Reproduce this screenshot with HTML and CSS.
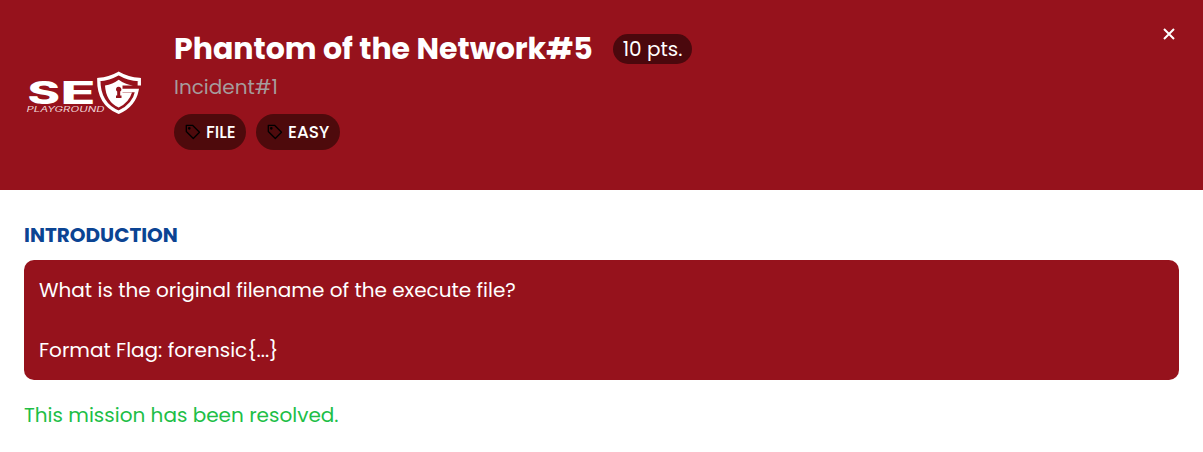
FILE: index.html
```
<!DOCTYPE html>
<html lang="en">
<head>
<meta charset="utf-8">
<title>Phantom of the Network#5</title>
<link rel="stylesheet" href="styles.css">
</head>
<body>
<header class="banner">
  <svg class="logo" viewBox="24 32 120 120" role="img" aria-label="SEC Playground">
    <text class="logo-name" x="27.500" y="104" textLength="32.500" lengthAdjust="spacingAndGlyphs">S</text>
    <text class="logo-name" x="60.500" y="104" textLength="35" lengthAdjust="spacingAndGlyphs">E</text>
    <text class="logo-sub" x="26.500" y="112.300" textLength="78" lengthAdjust="spacingAndGlyphs">PLAYGROUND</text>
    <path class="shield-ring" d="M139.300 85.500V79.500Q128 79 118.700 73.500Q109 79 98.800 79.500Q98.500 104 118.700 112.300Q134 105.500 137 90.500H122"/>
    <path class="shield-core" d="M118.700 79.800Q125 84.500 133 85.500H122.500V92.500H132Q129 102.500 118.700 107.500Q106 102 105 85.500Q112.500 84.500 118.700 79.800Z"/>
    <path class="keyhole" d="M116 89.500a2.700 2.700 0 1 1 4.200 2.100V95.500H121.500V98H116V95.500H117.200V91.600Q116 91 116 89.500Z"/>
  </svg>
  <div class="heading">
    <div class="title-row">
      <h1 class="title">Phantom of the Network#5</h1>
      <span class="points">10 pts.</span>
    </div>
    <div class="series">Incident#1</div>
    <div class="tags">
      <span class="tag"><svg class="tag-icon" viewBox="0 0 16 16"><path d="M1.300 1.300H7.500L14.500 8.300L8.300 14.500L1.300 7.500Z"/><circle cx="4.300" cy="4.300" r=".7"/></svg><span>FILE</span></span>
      <span class="tag easy-tag"><svg class="tag-icon" viewBox="0 0 16 16"><path d="M1.300 1.300H7.500L14.500 8.300L8.300 14.500L1.300 7.500Z"/><circle cx="4.300" cy="4.300" r=".7"/></svg><span>EASY</span></span>
    </div>
  </div>
  <button class="close" aria-label="Close"><svg viewBox="0 0 12 12"><path d="M1 1L11 11M11 1L1 11"/></svg></button>
</header>
<main class="content">
  <h2 class="section-title">INTRODUCTION</h2>
  <div class="question">
    <p class="prompt">What is the original filename of the execute file?</p>
    <p class="format">Format Flag: forensic{...}</p>
  </div>
  <p class="status">This mission has been resolved.</p>
</main>
</body>
</html>
```
FILE: styles.css
```
* { box-sizing: border-box; }
body { margin: 0; background: #fff; font-family: Poppins, Inter, "Liberation Sans", sans-serif; font-size: 20px; line-height: 30px; }
h1, h2, p { margin: 0; }
.banner { display: flex; align-items: flex-start; height: 190px; padding: 32px 28px 0 24px; background: #96121c; color: #fff; }
.logo { width: 120px; height: 120px; margin-right: 30px; flex: none; }
.logo-name { font: 800 31px Inter, sans-serif; fill: #fff; }
.logo-sub { font: italic 400 7px Inter, sans-serif; fill: #f0d5d7; }
.shield-ring { fill: none; stroke: #fff; stroke-width: 3.300; }
.shield-core { fill: #fff; }
.keyhole { fill: #96121c; }
.heading { flex: 1; }
.title-row { display: flex; align-items: center; height: 34px; }
.title { width: 439px; font-size: 30px; font-weight: 700; line-height: 34px; white-space: nowrap; }
.points { width: 79px; height: 30px; border-radius: 15px; background: #4b080d; text-align: center; line-height: 30px; }
.series { margin-top: 6px; color: #a69c9c; height: 30px; font-weight: 400; }
.tags { display: flex; gap: 10px; margin-top: 12px; }
.tag { display: flex; align-items: center; width: 72px; height: 36px; padding-left: 11px; border-radius: 18px; background: #4e0a0c; font-size: 17px; font-weight: 500; }
.easy-tag { width: 84px; }
.tag-icon { width: 16px; height: 16px; margin-right: 5px; fill: none; stroke: #000; stroke-width: 1.300; stroke-linejoin: round; flex: none; }
.close { display: flex; width: 12px; height: 12px; margin-top: -4px; padding: 0; border: 0; background: none; }
.close svg { width: 12px; height: 12px; fill: none; stroke: #fff; stroke-width: 2; }
.content { padding: 30px 24px 0; }
.section-title { color: #0b4493; font-size: 20px; line-height: 30px; font-weight: 700; }
.question { height: 120px; margin-top: 10px; padding: 15px; border-radius: 10px; background: #96121c; color: #fff; }
.format { margin-top: 30px; }
.status { margin-top: 20px; color: #20be46; }
```
